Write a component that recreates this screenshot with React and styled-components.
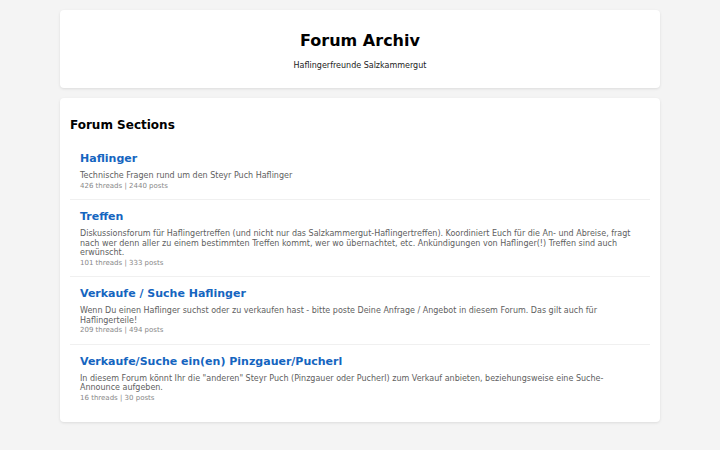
import React from 'react';
import styled, { createGlobalStyle } from 'styled-components';

const GlobalStyle = createGlobalStyle`
    body {
        margin: 0;
        background: #f4f4f4;
        font-family: "DejaVu Sans", sans-serif;
        color: #333;
    }
`;

const sections = [
    {
        title: 'Haflinger',
        text: 'Technische Fragen rund um den Steyr Puch Haflinger',
        threads: 426,
        posts: 2440,
    },
    {
        title: 'Treffen',
        text: 'Diskussionsforum für Haflingertreffen (und nicht nur das Salzkammergut-Haflingertreffen). Koordiniert Euch für die An- und Abreise, fragt nach wer denn aller zu einem bestimmten Treffen kommt, wer wo übernachtet, etc. Ankündigungen von Haflinger(!) Treffen sind auch erwünscht.',
        threads: 101,
        posts: 333,
    },
    {
        title: 'Verkaufe / Suche Haflinger',
        text: 'Wenn Du einen Haflinger suchst oder zu verkaufen hast - bitte poste Deine Anfrage / Angebot in diesem Forum. Das gilt auch für Haflingerteile!',
        threads: 209,
        posts: 494,
    },
    {
        title: 'Verkaufe/Suche ein(en) Pinzgauer/Pucherl',
        text: 'In diesem Forum könnt Ihr die "anderen" Steyr Puch (Pinzgauer oder Pucherl) zum Verkauf anbieten, beziehungsweise eine Suche-Announce aufgeben.',
        threads: 16,
        posts: 30,
    },
];

function App() {
    return (
        <>
            <GlobalStyle />
            <Page>
                <Card center>
                    <Title>Forum Archiv</Title>
                    <Subtitle>Haflingerfreunde Salzkammergut</Subtitle>
                </Card>
                <Card>
                    <SectionHeading>Forum Sections</SectionHeading>
                    <List>
                        {sections.map(s => (
                            <Item key={s.title}>
                                <ItemTitle href="#">{s.title}</ItemTitle>
                                <ItemText>{s.text}</ItemText>
                                <Meta>
                                    {s.threads} threads | {s.posts} posts
                                </Meta>
                            </Item>
                        ))}
                    </List>
                </Card>
            </Page>
        </>
    );
}

export default App;

const Page = styled.div`
    width: 600px;
    margin: 0 auto;
    padding: 10px 0;
    display: flex;
    flex-direction: column;
    gap: 10px;
`;

const Card = styled.div`
    background: #fff;
    border-radius: 4px;
    box-shadow: 0 1px 3px rgba(0, 0, 0, 0.1);
    padding: ${props => (props.center ? '21px 10px 17px' : '19px 10px 11px')};
    text-align: ${props => (props.center ? 'center' : 'left')};
`;

const Title = styled.h1`
    margin: 0 0 9px;
    font-size: 16px;
    line-height: 20px;
    color: #000;
`;

const Subtitle = styled.p`
    margin: 0;
    font-size: 8px;
    line-height: 11px;
    color: #222;
`;

const SectionHeading = styled.h2`
    margin: 0 0 9px;
    font-size: 12px;
    line-height: 16px;
    color: #000;
`;

const List = styled.div`
    display: flex;
    flex-direction: column;
`;

const Item = styled.div`
    padding: 9px 10px;
    border-bottom: 1px solid #f0f0f0;

    &:last-child {
        border-bottom: none;
    }
`;

const ItemTitle = styled.a`
    display: block;
    font-size: 11px;
    line-height: 15px;
    font-weight: bold;
    color: #1565c0;
    text-decoration: none;
    margin-bottom: 5px;
`;

const ItemText = styled.p`
    margin: 0 0 1px;
    font-size: 8px;
    line-height: 9.6px;
    color: #606060;
`;

const Meta = styled.div`
    font-size: 7px;
    line-height: 8.4px;
    color: #888;
`;
